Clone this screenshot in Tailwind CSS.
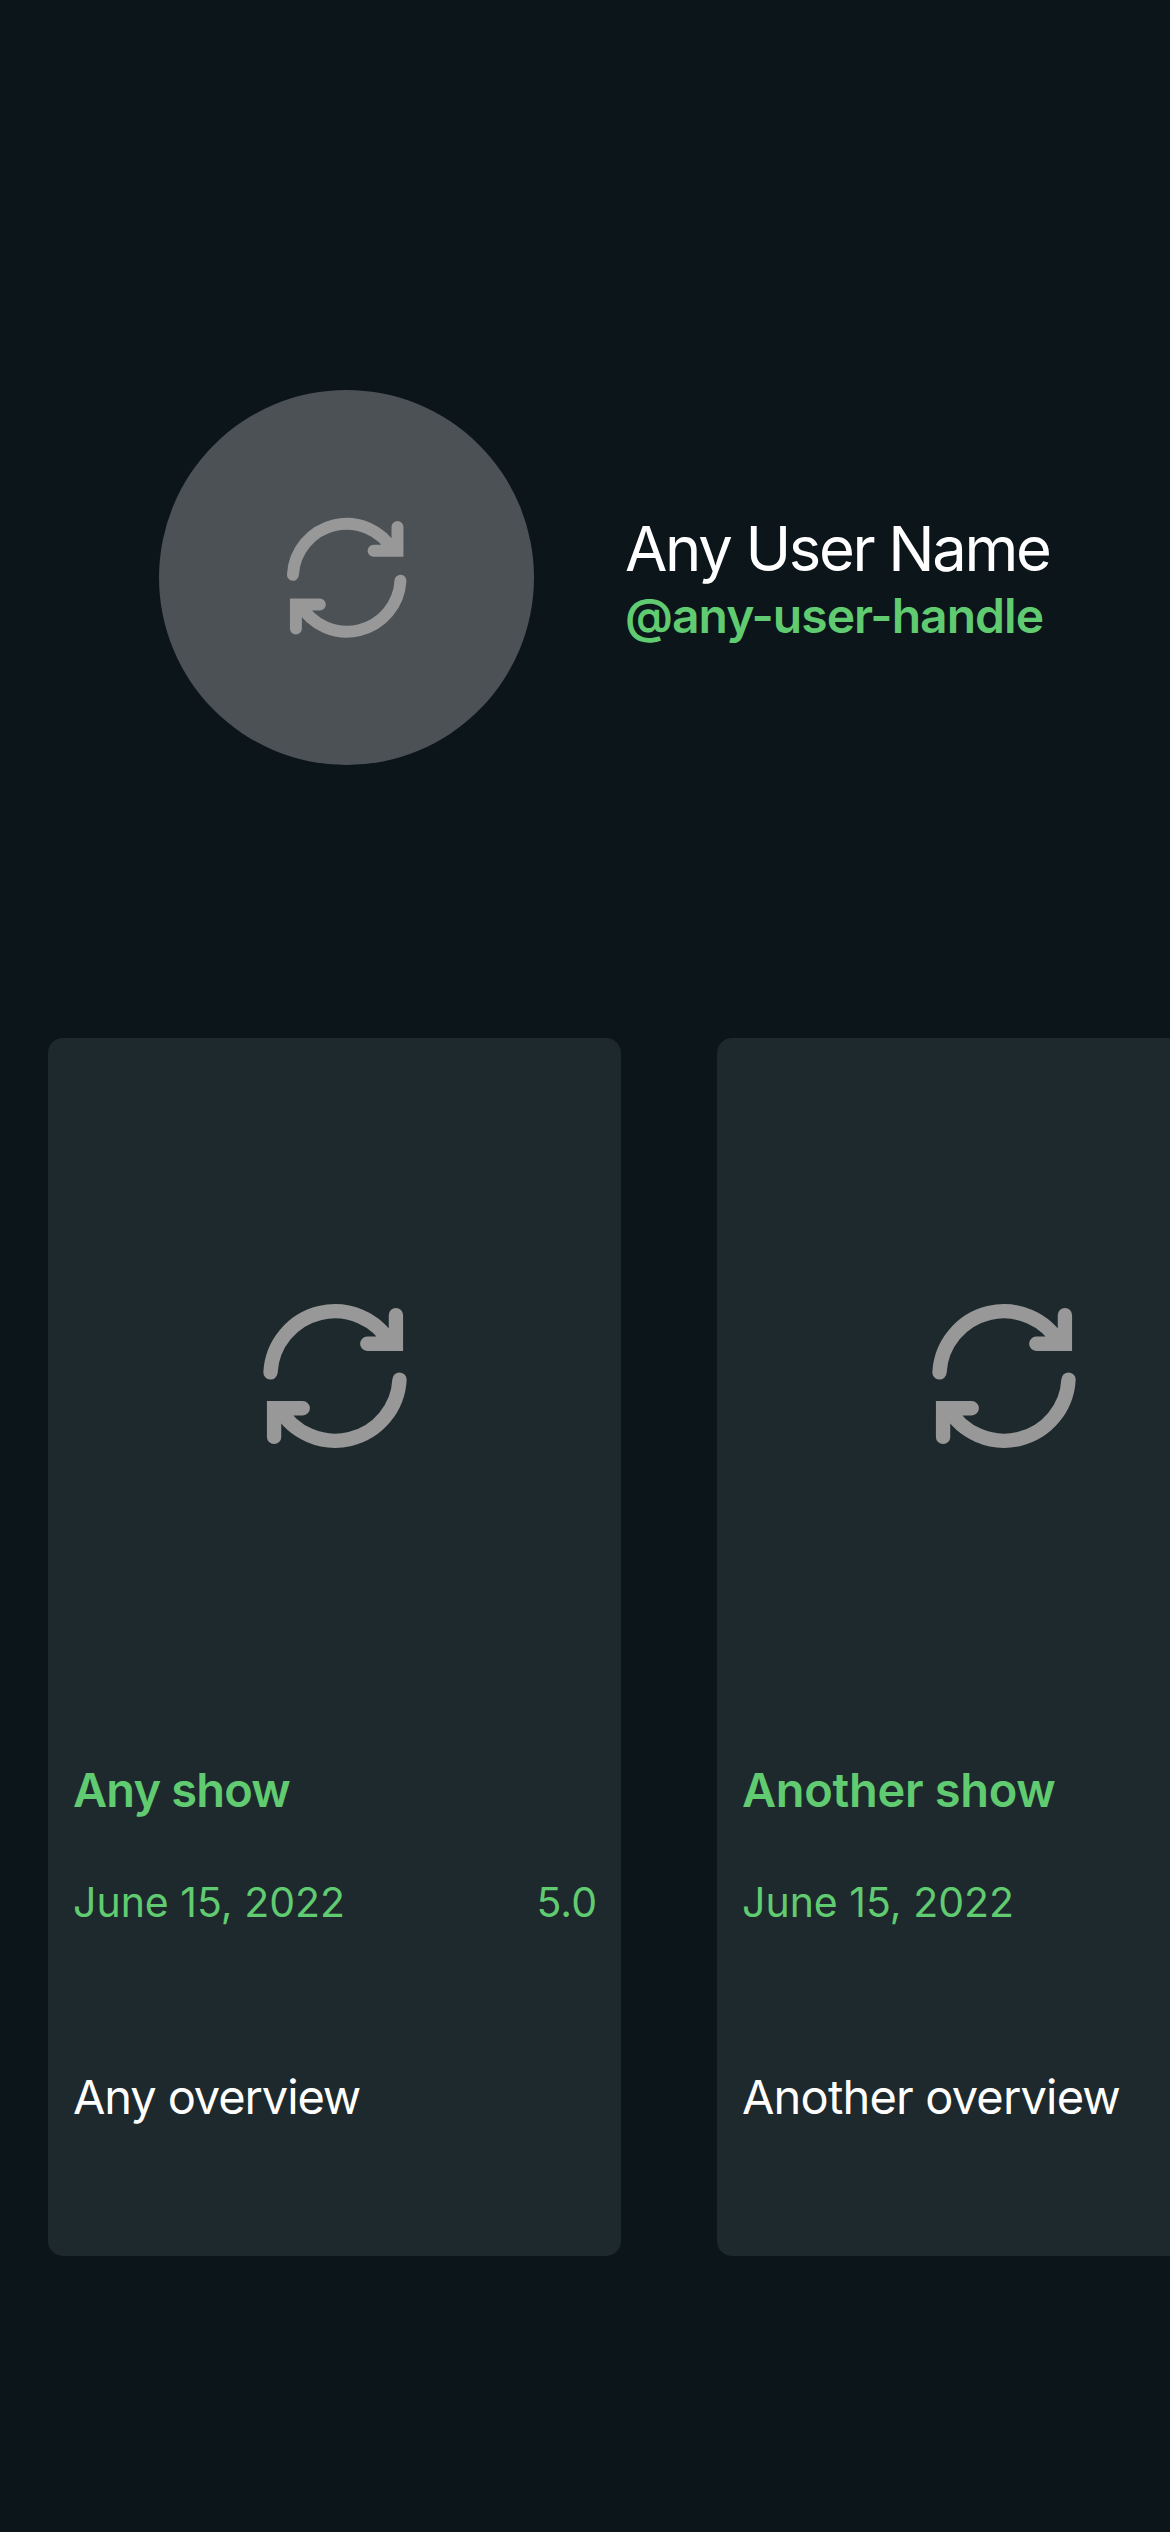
<!DOCTYPE html>
<html lang="en">
<head>
<meta charset="utf-8">
<title>Profile</title>
<script src="https://cdn.jsdelivr.net/npm/@tailwindcss/browser@4"></script>
</head>
<body class="h-[2532px] w-[1170px] overflow-hidden bg-[#0c151a] font-['Inter',sans-serif] text-white">
<svg class="hidden">
  <symbol id="refresh" viewBox="0 0 24 24">
    <g fill="none" stroke="#989898" stroke-width="2" stroke-linecap="round" stroke-linejoin="miter">
      <path d="M3 11.5A9 9 0 0 1 19.8 7.5M20.5 3.5v4h-4"/>
      <path d="M21 12.5A9 9 0 0 1 4.2 16.5M3.5 20.5v-4h4"/>
    </g>
  </symbol>
</svg>
<main class="flex flex-col pt-[390px]">
  <header class="flex h-[375px] items-center pl-[159px]">
    <div class="flex size-[375px] items-center justify-center rounded-full bg-[#4b5154]">
      <svg class="ml-px mt-px size-[143.4px]"><use href="#refresh"/></svg>
    </div>
    <div class="ml-[91px] pt-[4px] whitespace-nowrap">
      <h1 class="text-[61.5px] leading-[72px] tracking-[-2.33px]">Any User Name</h1>
      <p class="text-[48px] leading-[61px] font-semibold tracking-[-0.98px] text-[#60cb70]">@any-user-handle</p>
    </div>
  </header>
  <section class="mt-[273px] flex gap-24 overflow-hidden pl-12 whitespace-nowrap">
    <article class="h-[1218px] w-[573px] shrink-0 rounded-[15px] bg-[#1e292d]">
      <div class="flex h-[676px] items-center justify-center"><svg class="size-[172px]"><use href="#refresh"/></svg></div>
      <div class="pr-6 pl-[25px] pt-[46px]">
        <h2 class="text-[47px] leading-[60px] font-semibold tracking-[-0.85px] text-[#60cb70]">Any show</h2>
        <div class="mt-[55px] flex justify-between text-[41px] leading-[54px] text-[#60cb70]"><span>June 15, 2022</span><span>5.0</span></div>
        <p class="mt-[138px] text-[47px] leading-[60px] tracking-[-1.11px]">Any overview</p>
      </div>
    </article>
    <article class="h-[1218px] w-[573px] shrink-0 rounded-[15px] bg-[#1e292d]">
      <div class="flex h-[676px] items-center justify-center"><svg class="size-[172px]"><use href="#refresh"/></svg></div>
      <div class="pr-6 pl-[25px] pt-[46px]">
        <h2 class="text-[47px] leading-[60px] font-semibold tracking-[-0.32px] text-[#60cb70]">Another show</h2>
        <div class="mt-[55px] text-[41px] leading-[54px] text-[#60cb70]">June 15, 2022</div>
        <p class="mt-[138px] text-[47px] leading-[60px] tracking-[-0.83px]">Another overview</p>
      </div>
    </article>
  </section>
</main>
</body>
</html>
